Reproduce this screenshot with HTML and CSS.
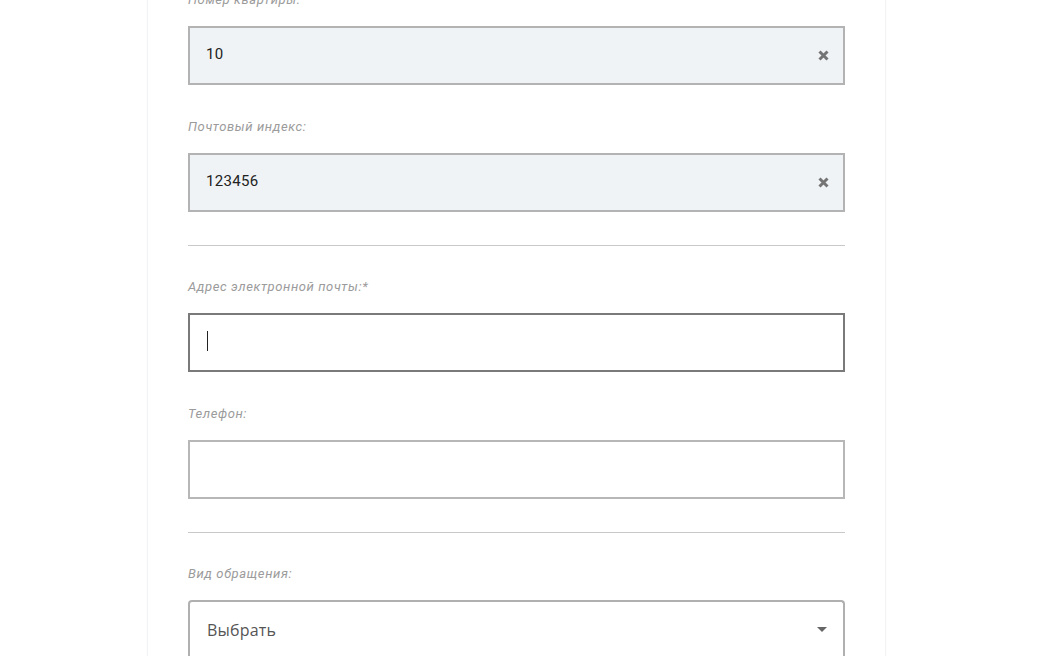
FILE: index.html
```html
<!DOCTYPE html>
<html lang="ru">
<head>
<meta charset="utf-8">
<link rel="stylesheet" href="styles.css">
</head>
<body>
<div class="page">
  <div class="card">
    <div class="field">
      <div class="label">Номер квартиры:</div>
      <div class="box filled"><span class="value">10</span><svg class="clear" viewBox="0 0 11 11" width="11" height="11"><path d="M1.5 1.5 L9.5 9.5 M9.5 1.5 L1.5 9.5" stroke="#747474" stroke-width="3" fill="none"/></svg></div>
    </div>
    <div class="field">
      <div class="label">Почтовый индекс:</div>
      <div class="box filled"><span class="value">123456</span><svg class="clear" viewBox="0 0 11 11" width="11" height="11"><path d="M1.5 1.5 L9.5 9.5 M9.5 1.5 L1.5 9.5" stroke="#747474" stroke-width="3" fill="none"/></svg></div>
    </div>
    <div class="sep"></div>
    <div class="field">
      <div class="label">Адрес электронной почты:*</div>
      <div class="box focused"><span class="caret"></span></div>
    </div>
    <div class="field">
      <div class="label">Телефон:</div>
      <div class="box"></div>
    </div>
    <div class="sep"></div>
    <div class="field">
      <div class="label">Вид обращения:</div>
      <div class="box select"><span class="placeholder">Выбрать</span><span class="arrow"></span></div>
    </div>
  </div>
</div>
</body>
</html>
```
FILE: styles.css
```css
html, body {
  margin: 0;
  padding: 0;
  background: #fff;
  overflow: hidden;
}
.page {
  padding-left: 147px;
}
.card {
  width: 657px;
  margin-top: -9px;
  padding: 0 40px 40px;
  border-left: 1px solid #f2f3f4;
  border-right: 1px solid #f2f3f4;
  box-shadow: 0 0 2px rgba(0,0,0,0.03);
}
.field {
  display: flex;
  flex-direction: column;
  padding-bottom: 33px;
}
.label {
  font-family: Roboto, "Liberation Sans", sans-serif;
  font-style: italic;
  font-size: 13px;
  line-height: 18px;
  height: 18px;
  color: #9b9b9b;
  letter-spacing: 0.6px;
  margin-bottom: 17px;
}
.box {
  position: relative;
  box-sizing: border-box;
  height: 59px;
  border: 2px solid #b7b7b7;
  background: #fff;
  display: flex;
  align-items: center;
  padding: 0 16px 4px;
}
.box.filled {
  background: #eff3f6;
  border-color: #b3b3b3;
}
.box.focused {
  border-color: #7a7a7a;
}
.value {
  font-family: Roboto, "Liberation Sans", sans-serif;
  font-size: 15px;
  letter-spacing: 0.3px;
  color: #222;
}
.clear {
  position: absolute;
  right: 14px;
  top: 22px;
}
.caret {
  display: block;
  width: 1px;
  height: 20px;
  background: #222;
  margin-left: 1px;
}
.sep {
  height: 1px;
  background: #c9c9c9;
  margin-bottom: 32px;
}
.box.select {
  border-radius: 4px 4px 0 0;
  border-color: #b0b0b0;
  border-bottom: none;
  padding-bottom: 2px;
  padding-top: 0;
}
.placeholder {
  font-family: "Open Sans", "Liberation Sans", sans-serif;
  font-size: 16px;
  color: #555;
  margin-left: 1px;
  letter-spacing: 0.2px;
}
.arrow {
  position: absolute;
  right: 16px;
  top: 25px;
  width: 0;
  height: 0;
  border-left: 5px solid transparent;
  border-right: 5px solid transparent;
  border-top: 5px solid #666;
}
```
